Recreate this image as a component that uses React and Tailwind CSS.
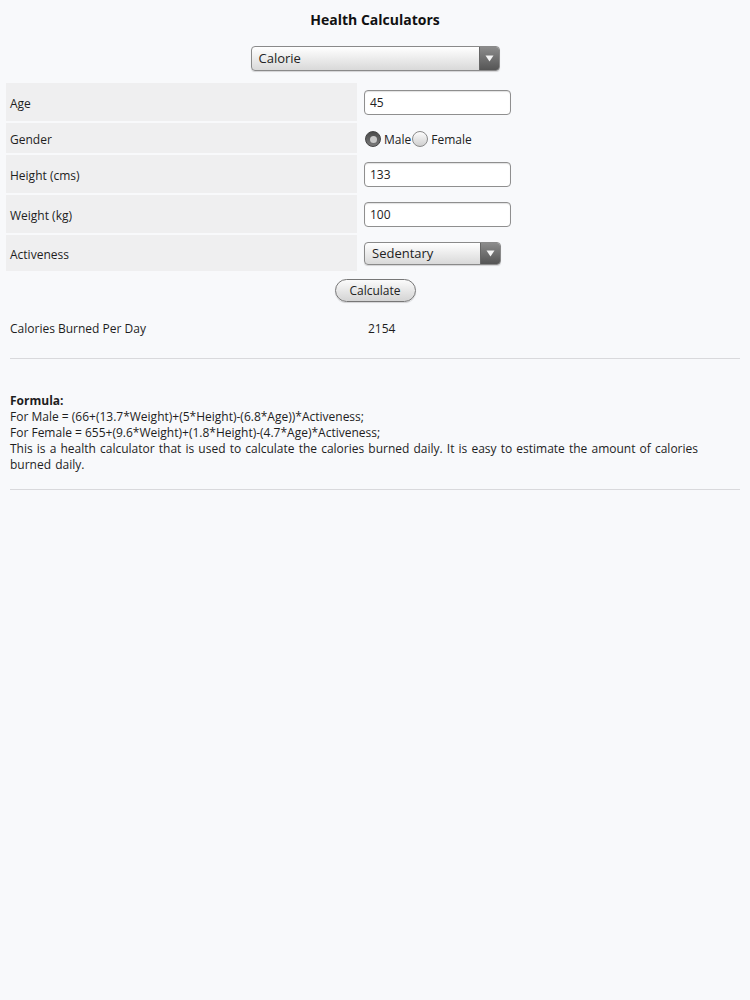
import { useState } from 'react';

// Select with the glossy grey arrow block on the right
const GlossySelect = ({ value, className }) => (
  <div
    className={`flex items-stretch rounded-[4px] border border-[#8a8a8a] bg-gradient-to-b from-white to-[#d9d9d9] shadow-[0_1px_1px_rgba(0,0,0,0.15)] overflow-hidden ${className}`}
  >
    <div className="flex-1 flex items-center pl-[7px] pt-[1px] text-[13px] text-[#222]">{value}</div>
    <div className="w-[20px] flex items-center justify-center bg-gradient-to-b from-[#8c8c8c] to-[#555] border-l border-[#666]">
      <svg width="9" height="7" viewBox="0 0 9 7">
        <path d="M0.5 0.5 L8.5 0.5 L4.5 6.5 Z" fill="#f4f4f4" />
      </svg>
    </div>
  </div>
);

const TextBox = ({ value }) => (
  <div className="w-[147px] h-[25px] flex items-center px-[5px] pt-[2px] rounded-[4px] border border-[#8f8f8f] bg-white shadow-[inset_0_1px_1px_rgba(0,0,0,0.12)] text-[12px] text-[#222]">
    {value}
  </div>
);

const Radio = ({ checked }) =>
  checked ? (
    <span className="w-[16px] h-[16px] rounded-full bg-gradient-to-b from-[#4a4a4a] to-[#7a7a7a] border border-[#444] flex items-center justify-center">
      <span className="w-[7px] h-[7px] rounded-full bg-[#c9c9c9]" />
    </span>
  ) : (
    <span className="w-[16px] h-[16px] rounded-full bg-gradient-to-b from-[#fdfdfd] to-[#cfcfcf] border border-[#8a8a8a]" />
  );

const rows = [
  { label: 'Age', h: 'h-[38px]', field: <TextBox value="45" /> },
  {
    label: 'Gender',
    h: 'h-[30px]',
    field: (
      <div className="flex items-center text-[12px] text-[#222] pl-[1px] pt-[2px]">
        <Radio checked />
        <span className="ml-[3px] mr-[1px] pt-[1px]">Male</span>
        <Radio />
        <span className="ml-[3px] pt-[1px]">Female</span>
      </div>
    ),
  },
  { label: 'Height (cms)', h: 'h-[38px]', field: <TextBox value="133" /> },
  { label: 'Weight (kg)', h: 'h-[38px]', field: <TextBox value="100" /> },
  { label: 'Activeness', h: 'h-[36px]', field: <GlossySelect value="Sedentary" className="w-[137px] h-[23px]" /> },
];

export default function App() {
  const [result] = useState(2154);

  return (
    <div className="min-h-[1000px] bg-[#f8f9fb] text-[#1e1e1e] font-['Open_Sans',sans-serif] text-[12px]">
      <h1 className="pt-[10px] text-center text-[14px] font-bold leading-[20px] text-[#111]">Health Calculators</h1>

      <div className="flex justify-center mt-[16px]">
        <GlossySelect value="Calorie" className="w-[249px] h-[25px]" />
      </div>

      {/* Input rows */}
      <div className="mt-[12px] ml-[6px] flex flex-col gap-[2px]">
        {rows.map((row) => (
          <div key={row.label} className={`flex ${row.h}`}>
            <div className="w-[351px] bg-[#efeff0] flex items-center pl-[4px] pt-[4px]">{row.label}</div>
            <div className="pl-[7px] flex items-center">{row.field}</div>
          </div>
        ))}
      </div>

      <div className="flex justify-center mt-[8px]">
        <button className="w-[81px] h-[23px] rounded-full border border-[#777] bg-gradient-to-b from-[#fbfbfb] to-[#d4d4d4] text-[12px] text-[#222] shadow-[0_1px_1px_rgba(0,0,0,0.15)]">
          Calculate
        </button>
      </div>

      <div className="flex mt-[19px] leading-[16px]">
        <div className="w-[358px] pl-[10px]">Calories Burned Per Day</div>
        <div className="pl-[10px]">{result}</div>
      </div>

      <hr className="mx-[10px] mt-[21px] border-t border-[#d9d9dc]" />

      <div className="px-[10px] mt-[34px] leading-[16px]">
        <div className="font-bold">Formula:</div>
        <div>For Male = (66+(13.7*Weight)+(5*Height)-(6.8*Age))*Activeness;</div>
        <div>For Female = 655+(9.6*Weight)+(1.8*Height)-(4.7*Age)*Activeness;</div>
        <div className="[word-spacing:1px]">
          This is a health calculator that is used to calculate the calories burned daily. It is easy to estimate the
          amount of calories burned daily.
        </div>
      </div>

      <hr className="mx-[10px] mt-[16px] border-t border-[#d9d9dc]" />
    </div>
  );
}
